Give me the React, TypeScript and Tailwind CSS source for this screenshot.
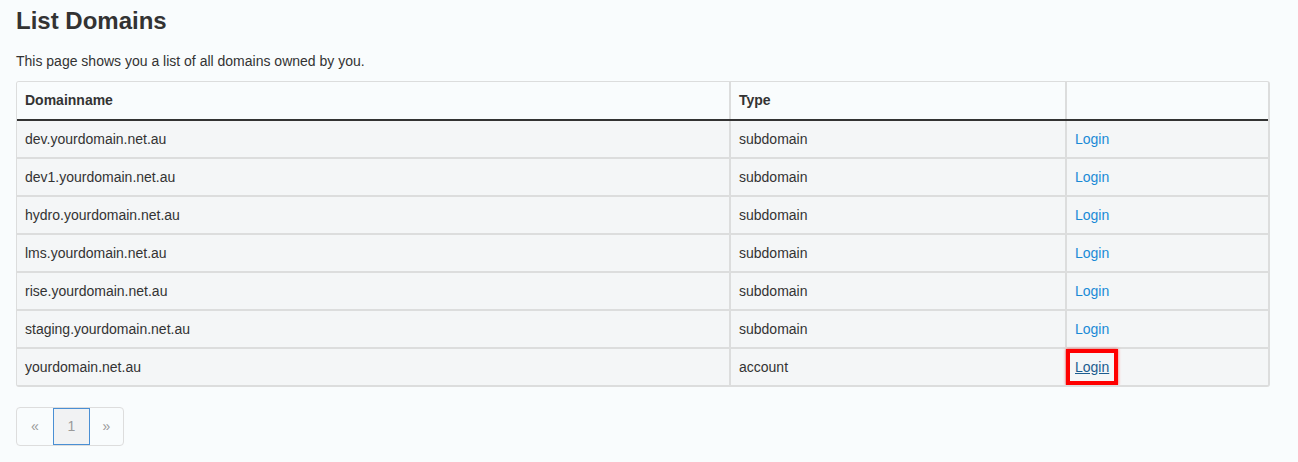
const domains = [
  { name: "dev.yourdomain.net.au", type: "subdomain" },
  { name: "dev1.yourdomain.net.au", type: "subdomain" },
  { name: "hydro.yourdomain.net.au", type: "subdomain" },
  { name: "lms.yourdomain.net.au", type: "subdomain" },
  { name: "rise.yourdomain.net.au", type: "subdomain" },
  { name: "staging.yourdomain.net.au", type: "subdomain" },
  { name: "yourdomain.net.au", type: "account" },
];

const App = () => {
  return (
    <main
      className="min-h-[462px] bg-[#f9fcfd] pl-4 pt-2 text-[#333333]"
      style={{ fontFamily: '"Liberation Sans", Arial, sans-serif' }}
    >
      <h1 className="text-[24px] font-bold leading-[26px]">List Domains</h1>
      <p className="mt-[17px] text-[14px] leading-[20px]">
        This page shows you a list of all domains owned by you.
      </p>

      <div className="mt-[10px] w-[1254px] overflow-hidden rounded-[3px] border-t border-l border-r-2 border-b-2 border-[#dcdddd] text-[14px]">
        <div className="grid grid-cols-[714px_336px_1fr] border-b-2 border-[#333333] bg-[#f9fcfd] font-bold">
          <div className="flex h-[37px] items-center border-r-2 border-[#dcdddd] px-2">
            Domainname
          </div>
          <div className="flex h-[37px] items-center border-r-2 border-[#dcdddd] px-2">
            Type
          </div>
          <div className="h-[37px]"></div>
        </div>

        {domains.map((d, i) => {
          const last = i === domains.length - 1;
          return (
            <div
              key={d.name}
              className={`grid grid-cols-[714px_336px_1fr] bg-[#f4f6f7] ${
                last ? "" : "border-b-2 border-[#dcdddd]"
              }`}
            >
              <div className="flex h-[36px] items-center border-r-2 border-[#dcdddd] px-2">
                {d.name}
              </div>
              <div className="flex h-[36px] items-center border-r-2 border-[#dcdddd] px-2">
                {d.type}
              </div>
              {last ? (
                <div className="flex h-[36px] items-center">
                  <a
                    href="#"
                    className="-ml-px flex h-[36px] items-center border-4 border-[#ff0000] px-[5px] text-[#1b5c8f] underline shadow-[0_0_3px_rgba(255,0,0,0.6)]"
                  >
                    Login
                  </a>
                </div>
              ) : (
                <div className="flex h-[36px] items-center px-2">
                  <a href="#" className="text-[#1a8ad6]">
                    Login
                  </a>
                </div>
              )}
            </div>
          );
        })}
      </div>

      <nav className="mt-[20px] flex h-[39px] w-[108px] overflow-hidden rounded-[4px] border border-[#dddddd] text-[14px] text-[#9a9a9a]">
        <span className="flex w-[36px] items-center justify-center">«</span>
        <span className="flex w-[37px] items-center justify-center border border-[#4a8fd4] bg-[#f1f2f3]">
          1
        </span>
        <span className="flex flex-1 items-center justify-center">»</span>
      </nav>
    </main>
  );
};

export default App;
